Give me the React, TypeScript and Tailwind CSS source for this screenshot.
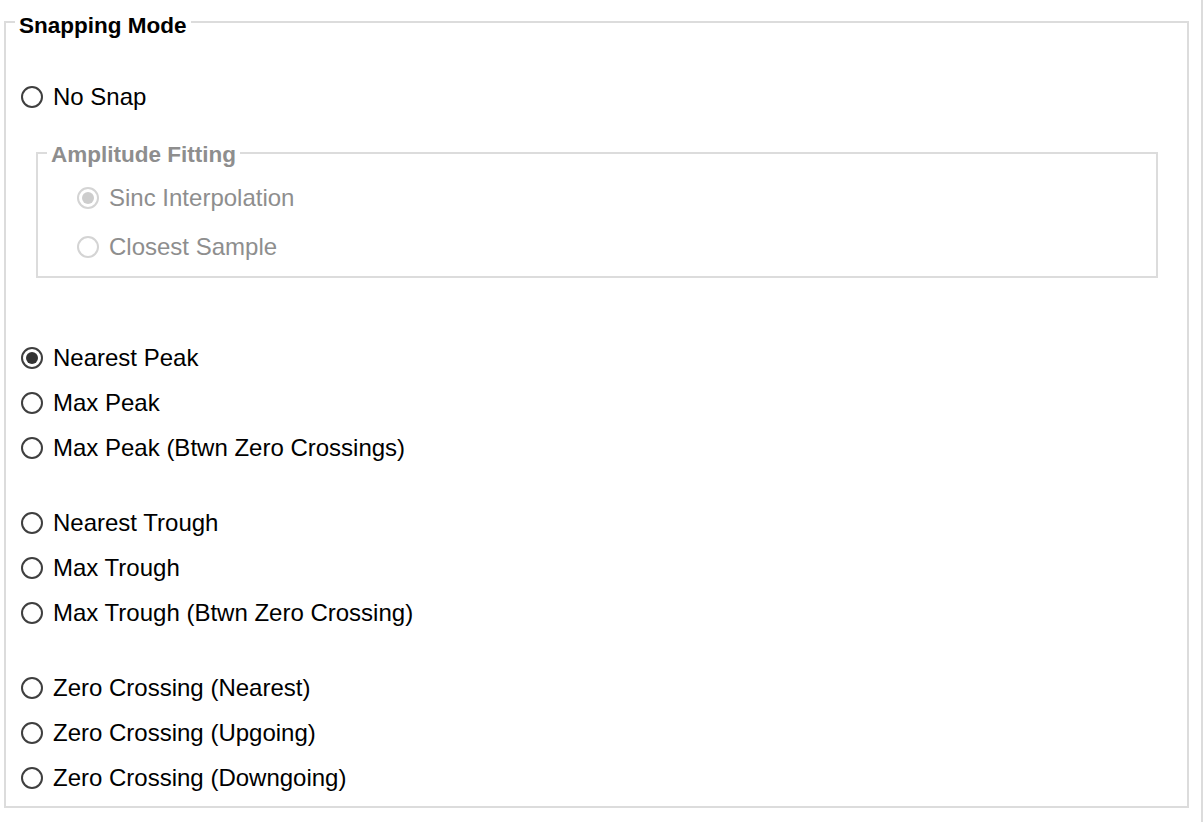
import type { ReactNode } from "react";

type Opt = { label: string; checked?: boolean };

const groups: Opt[][] = [
  [{ label: "Nearest Peak", checked: true }, { label: "Max Peak" }, { label: "Max Peak (Btwn Zero Crossings)" }],
  [{ label: "Nearest Trough" }, { label: "Max Trough" }, { label: "Max Trough (Btwn Zero Crossing)" }],
  [{ label: "Zero Crossing (Nearest)" }, { label: "Zero Crossing (Upgoing)" }, { label: "Zero Crossing (Downgoing)" }],
];

function Radio({ checked, disabled }: { checked?: boolean; disabled?: boolean }) {
  return (
    <span
      className={`flex h-[22px] w-[22px] shrink-0 items-center justify-center rounded-full border-2 bg-white ${
        disabled ? "border-[#d4d4d4]" : "border-[#3f3f3f]"
      }`}
    >
      {checked && (
        <span className={`h-[12px] w-[12px] rounded-full ${disabled ? "bg-[#cdcdcd]" : "bg-[#333]"}`} />
      )}
    </span>
  );
}

function Row({ label, checked, disabled, h = "h-[45px]" }: Opt & { disabled?: boolean; h?: string }) {
  return (
    <div className={`flex items-center gap-[10px] ${h}`}>
      <Radio checked={checked} disabled={disabled} />
      <span className={`text-[24px] leading-none ${disabled ? "text-[#8e8e8e]" : "text-black"}`}>{label}</span>
    </div>
  );
}

function Legend({ children, muted }: { children: ReactNode; muted?: boolean }) {
  return (
    <span
      className={`absolute left-[9px] bg-white px-[4px] text-[22.5px] font-bold leading-[26px] ${
        muted ? "-top-[12px] text-[#8e8e8e]" : "-top-[10px] text-black"
      }`}
    >
      {children}
    </span>
  );
}

export default function App() {
  return (
    <div
      className="flex h-[822px] w-[1204px] overflow-hidden bg-white"
      style={{ fontFamily: '"Liberation Sans", Arial, sans-serif' }}
    >
      {/* Snapping mode group */}
      <div className="relative ml-[4px] mt-[21px] h-[787px] w-[1185px] border-2 border-[#dcdcdc] pl-[15px] pt-[51px]">
        <Legend>Snapping Mode</Legend>

        <Row label="No Snap" />

        {/* Amplitude fitting (disabled) */}
        <div className="relative ml-[15px] mt-[33px] h-[126px] w-[1122px] border-2 border-[#dcdcdc] pl-[39px] pt-[19px]">
          <Legend muted>Amplitude Fitting</Legend>
          <Row label="Sinc Interpolation" checked disabled h="h-[49px]" />
          <Row label="Closest Sample" disabled h="h-[49px]" />
        </div>

        <div className="mt-[57px] flex flex-col gap-[30px]">
          {groups.map((g, i) => (
            <div key={i}>
              {g.map((o) => (
                <Row key={o.label} {...o} />
              ))}
            </div>
          ))}
        </div>
      </div>

      {/* right edge of the pane */}
      <div className="ml-[12px] h-full w-[2px] bg-[#dcdcdc]" />
    </div>
  );
}
